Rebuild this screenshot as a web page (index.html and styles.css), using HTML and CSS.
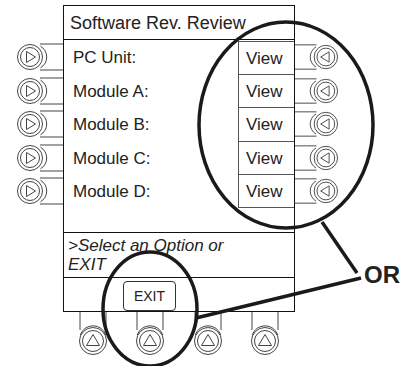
FILE: index.html
```html
<!DOCTYPE html>
<html lang="en">
<head>
  <meta charset="UTF-8">
  <meta name="viewport" content="width=device-width, initial-scale=1.0">
  <title>Software Rev. Review</title>
  <link rel="stylesheet" href="styles.css">
</head>
<body>
  <svg class="defs" width="0" height="0">
    <symbol id="side-key" viewBox="0 0 46 34">
      <line x1="23" y1="4" x2="46" y2="4" />
      <line x1="23" y1="30" x2="46" y2="30" />
      <path d="M23.5 6.2 A12.5 12.5 0 0 1 23.5 27.8" />
      <circle cx="13" cy="17" r="12.5" />
      <circle cx="13" cy="17" r="9.5" />
      <path d="M9.5 11.5 L9.5 22.5 L18.5 17 Z" />
    </symbol>
    <symbol id="soft-key" viewBox="0 0 30 48">
      <line x1="2" y1="0" x2="2" y2="18" />
      <line x1="28" y1="0" x2="28" y2="18" />
      <path d="M2.2 23 A13.5 13.5 0 0 1 27.8 23" />
      <circle cx="15" cy="29" r="13.5" />
      <circle cx="15" cy="29" r="10.5" />
      <path d="M15 22.5 L8.5 33.5 L21.5 33.5 Z" />
    </symbol>
  </svg>

  <div class="stage">
    <div class="panel">
      <div class="keys keys-left">
        <svg class="key"><use href="#side-key" /></svg>
        <svg class="key"><use href="#side-key" /></svg>
        <svg class="key"><use href="#side-key" /></svg>
        <svg class="key"><use href="#side-key" /></svg>
        <svg class="key"><use href="#side-key" /></svg>
      </div>

      <div class="screen">
        <div class="title">Software Rev. Review</div>
        <div class="rows">
          <div class="row"><span class="label">PC Unit:</span><span class="view">View</span></div>
          <div class="row"><span class="label">Module A:</span><span class="view">View</span></div>
          <div class="row"><span class="label">Module B:</span><span class="view">View</span></div>
          <div class="row"><span class="label">Module C:</span><span class="view">View</span></div>
          <div class="row"><span class="label">Module D:</span><span class="view">View</span></div>
        </div>
        <div class="spacer"></div>
        <div class="message">&gt;Select an Option or<br>EXIT</div>
        <div class="footer"><span class="exit">EXIT</span></div>
      </div>

      <div class="keys keys-right">
        <svg class="key key-flip" viewBox="0 0 43 34"><use href="#side-key" /></svg>
        <svg class="key key-flip" viewBox="0 0 43 34"><use href="#side-key" /></svg>
        <svg class="key key-flip" viewBox="0 0 43 34"><use href="#side-key" /></svg>
        <svg class="key key-flip" viewBox="0 0 43 34"><use href="#side-key" /></svg>
        <svg class="key key-flip" viewBox="0 0 43 34"><use href="#side-key" /></svg>
      </div>
    </div>

    <div class="soft-keys">
      <svg class="soft"><use href="#soft-key" /></svg>
      <svg class="soft"><use href="#soft-key" /></svg>
      <svg class="soft"><use href="#soft-key" /></svg>
      <svg class="soft"><use href="#soft-key" /></svg>
    </div>

    <!-- callout marks drawn over the panel -->
    <svg class="callouts" width="417" height="366" viewBox="0 0 417 366">
      <ellipse cx="286" cy="125" rx="87" ry="103" />
      <ellipse cx="150" cy="309" rx="47" ry="57" />
      <line x1="322" y1="222" x2="357" y2="273" />
      <line x1="361" y1="278" x2="196" y2="318" />
    </svg>
    <div class="or">OR</div>
  </div>
</body>
</html>
```

FILE: styles.css
```css
body {
  margin: 0;
  font-family: "Liberation Sans", Arial, sans-serif;
  color: #222;
  background: #fff;
}
.defs {
  position: absolute;
}
.stage {
  position: relative;
  width: 417px;
  height: 366px;
  overflow: hidden;
}
.panel {
  display: flex;
  padding-top: 5px;
}
.keys {
  display: flex;
  flex-direction: column;
  padding-top: 35px;
}
.keys-left {
  width: 63px;
  align-items: flex-end;
}
.key {
  width: 46px;
  height: 34px;
  margin-bottom: -0.4px;
  fill: none;
  stroke: #444;
  stroke-width: 1;
}
.key circle {
  fill: #fff;
}
.key-flip {
  width: 43px;
  transform: scaleX(-1);
}
.screen {
  width: 232px;
  height: 307px;
  box-sizing: border-box;
  border: 1px solid #111;
  display: flex;
  flex-direction: column;
}
.title {
  height: 34px;
  box-sizing: border-box;
  border-bottom: 1px solid #111;
  padding-left: 6px;
  font-size: 18px;
  line-height: 35px;
}
.row {
  height: 33.6px;
  display: flex;
}
.label {
  flex: 1;
  padding-left: 9px;
  font-size: 17px;
  line-height: 35px;
}
.view {
  width: 56px;
  box-sizing: border-box;
  border-left: 1px solid #555;
  border-top: 1px solid #555;
  padding-left: 7px;
  font-size: 17px;
  line-height: 33px;
}
.row:first-child .view {
  margin-top: 1px;
}
.row:last-child .view {
  border-bottom: 1px solid #555;
}
.spacer {
  flex: 1;
}
.message {
  height: 45px;
  box-sizing: border-box;
  border-top: 1px solid #111;
  padding: 3px 4px 0;
  font-size: 17px;
  font-style: italic;
  line-height: 19px;
}
.footer {
  height: 34px;
  box-sizing: border-box;
  border-top: 1px solid #111;
  padding: 3px 0 0 59px;
}
.exit {
  display: inline-block;
  width: 53px;
  height: 30px;
  box-sizing: border-box;
  border: 1px solid #333;
  border-radius: 4px;
  text-align: center;
  font-size: 14px;
  line-height: 28px;
}
.soft-keys {
  display: flex;
  gap: 27.3px;
  padding-left: 78px;
}
.soft {
  width: 30px;
  height: 48px;
  fill: none;
  stroke: #444;
  stroke-width: 1;
}
.soft circle {
  fill: #fff;
}
.callouts {
  position: absolute;
  left: 0;
  top: 0;
  fill: none;
  stroke: #1a1a1a;
  stroke-width: 3.5;
  pointer-events: none;
}
.or {
  position: absolute;
  left: 364px;
  top: 261px;
  font-size: 24px;
  font-weight: bold;
  line-height: 28px;
}
```
